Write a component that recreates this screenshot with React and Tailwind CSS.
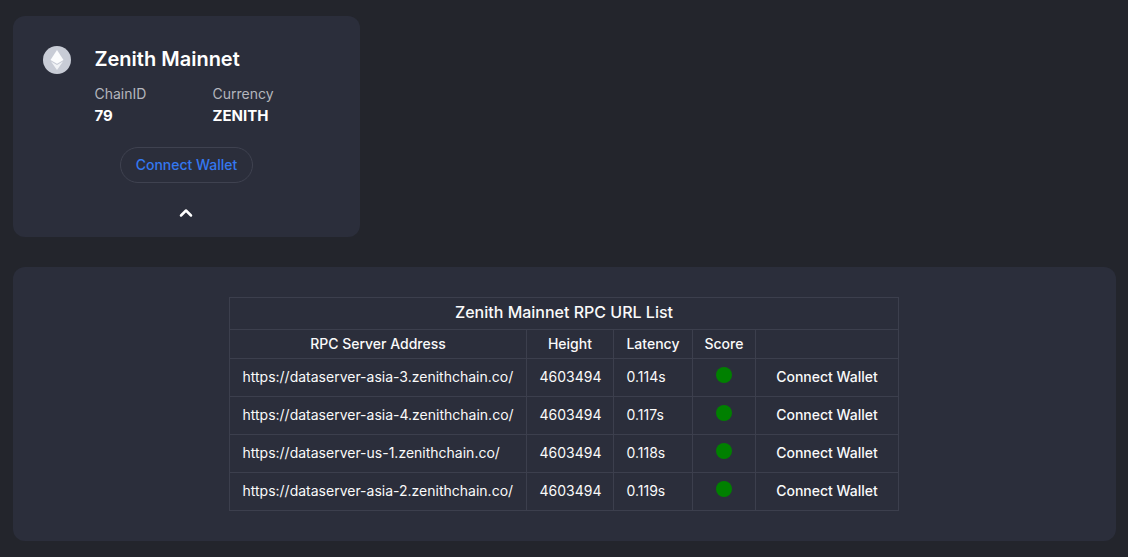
import React from "react";
import { ChevronUp } from "lucide-react";

const RPC_ROWS = [
  { url: "https://dataserver-asia-3.zenithchain.co/", height: 4603494, latency: "0.114s" },
  { url: "https://dataserver-asia-4.zenithchain.co/", height: 4603494, latency: "0.117s" },
  { url: "https://dataserver-us-1.zenithchain.co/", height: 4603494, latency: "0.118s" },
  { url: "https://dataserver-asia-2.zenithchain.co/", height: 4603494, latency: "0.119s" },
];

const cell = "border border-[#3c3f4d] pl-[12.5px] pb-[1px] text-sm text-[#fafafa]";
const head = "border border-[#3c3f4d] pb-[1px] text-sm font-medium text-[#fafafa]";

const EthIcon = () => (
  <svg viewBox="0 0 28 28" className="w-7 h-7 shrink-0">
    <circle cx="14" cy="14" r="14" fill="#c8ccd6" />
    <path d="M14 4 L20.5 14 L14 17.8 L7.5 14 Z" fill="#fbfcfd" />
    <path d="M14 19 L20 15.4 L14 24 L8 15.4 Z" fill="#f1f3f6" />
  </svg>
);

const ChainCard = () => (
  <div className="w-[347px] h-[221px] rounded-xl bg-[#2b2e3b] pt-[29px] flex flex-col">
    <div className="flex pl-[30px]">
      <div className="pt-[1px]">
        <EthIcon />
      </div>
      <div className="ml-[23.5px]">
        <h2 className="text-[20px] leading-7 font-semibold text-white">Zenith Mainnet</h2>
        <div className="flex mt-[10px]">
          <div className="w-[118px]">
            <p className="text-sm leading-[22px] text-[#b4b6bd]">ChainID</p>
            <p className="text-[15px] leading-[22px] font-bold text-white">79</p>
          </div>
          <div>
            <p className="text-sm leading-[22px] text-[#b4b6bd]">Currency</p>
            <p className="text-[15px] leading-[22px] font-bold text-white">ZENITH</p>
          </div>
        </div>
      </div>
    </div>
    <button className="self-center mt-[20px] h-9 px-[15px] rounded-full border border-[#3f4250] text-sm font-medium text-[#3478f0]">
      Connect Wallet
    </button>
    <ChevronUp size={20} strokeWidth={3} className="self-center mt-[20px] ml-[-1px] text-white" />
  </div>
);

const RpcTable = () => (
  <table className="w-[669px] table-fixed border-collapse">
    <colgroup>
      <col className="w-[297px]" />
      <col className="w-[87px]" />
      <col className="w-[79px]" />
      <col className="w-[63px]" />
      <col className="w-[143px]" />
    </colgroup>
    <thead>
      <tr className="h-[32px]">
        <th colSpan={5} className="border border-[#3c3f4d] pb-[3px] text-base font-medium text-[#fafafa]">
          Zenith Mainnet RPC URL List
        </th>
      </tr>
      <tr className="h-[29px]">
        <th className={head}>RPC Server Address</th>
        <th className={head}>Height</th>
        <th className={head}>Latency</th>
        <th className={head}>Score</th>
        <th className="border border-[#3c3f4d]"></th>
      </tr>
    </thead>
    <tbody>
      {RPC_ROWS.map((row) => (
        <tr key={row.url} className="h-[38px]">
          <td className={cell}>{row.url}</td>
          <td className={cell}>{row.height}</td>
          <td className={cell}>{row.latency}</td>
          <td className="border border-[#3c3f4d]">
            <div className="w-4 h-4 mx-auto mb-[5px] rounded-full bg-[#008000]" />
          </td>
          <td className="border border-[#3c3f4d] pb-[1px] text-center text-sm font-medium text-[#fafafa]">
            Connect Wallet
          </td>
        </tr>
      ))}
    </tbody>
  </table>
);

export default function App() {
  return (
    <div className="w-[1128px] h-[557px] overflow-hidden bg-[#23252c] pt-4 px-[13px] font-['Inter',sans-serif]">
      <ChainCard />
      <div className="mt-[30px] w-[1103px] h-[274px] rounded-xl bg-[#2b2e3b] pt-[30px] flex justify-center">
        <div className="ml-[-1px]">
          <RpcTable />
        </div>
      </div>
    </div>
  );
}
